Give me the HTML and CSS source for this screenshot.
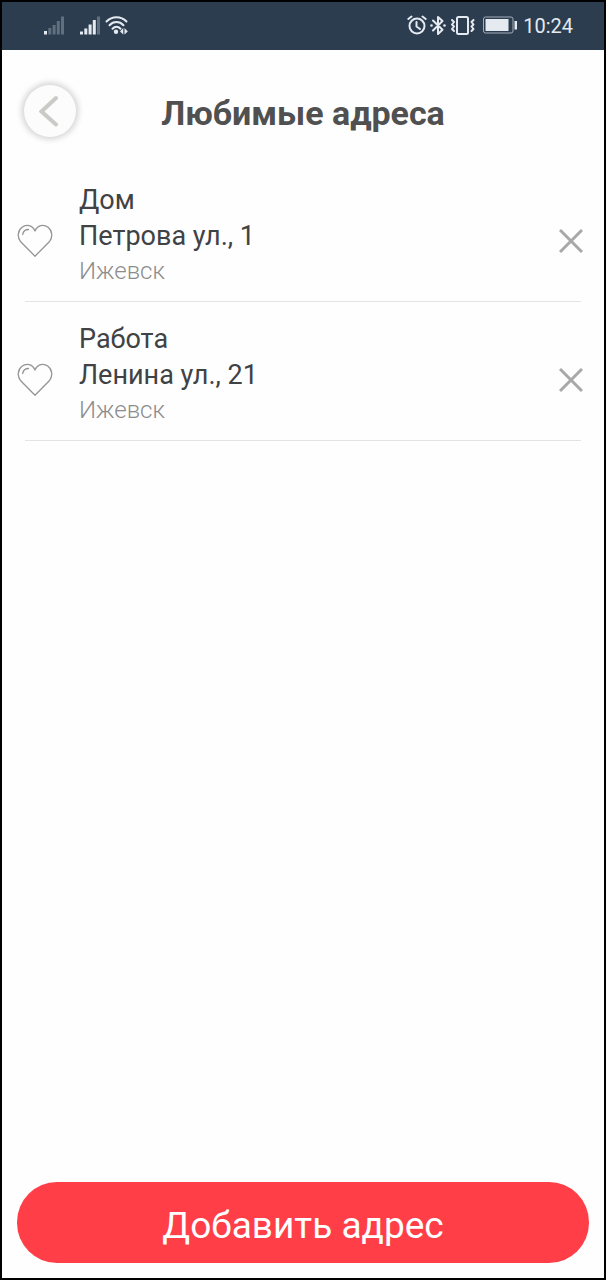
FILE: index.html
```html
<!DOCTYPE html>
<html lang="ru">
<head>
<meta charset="utf-8">
<meta name="viewport" content="width=device-width, initial-scale=1">
<title>Любимые адреса</title>
<link rel="stylesheet" href="styles.css">
</head>
<body>
<div class="screen">
  <div class="status">
    <div class="status-group">
      <svg class="signal" width="20" height="19" viewBox="0 0 20 19" aria-hidden="true">
        <path class="bar-on" d="M0 15h3v3.500H0z"/>
        <path class="bar-off" d="M4.300 12h3v6.500h-3zM8.600 9h3v9.500h-3zM12.800 5h3v13.500h-3zM17 .5h3v18h-3z"/>
      </svg>
      <svg class="signal" width="20" height="19" viewBox="0 0 20 19" aria-hidden="true">
        <path class="bar-on" d="M0 15.500h3v3H0zM4.300 12.500h3v6h-3zM8.600 8.500h3v10h-3zM12.800 4h3v14.500h-3z"/>
        <path class="bar-off" d="M17 .5h3v18h-3z"/>
      </svg>
      <svg class="wifi" width="23" height="20" viewBox="0 0 23 20" aria-hidden="true">
        <g class="stroke" stroke-width="2">
          <path d="M1.500 6.500C7 .7 16 .7 21.500 6.500"/>
          <path d="M4.500 10.200c4-4.200 10-4.200 14 0"/>
          <path d="M7.500 13.700c2.500-2.600 5.500-2.600 8 0"/>
        </g>
        <circle class="fill" cx="11" cy="16.700" r="2.200"/>
        <path class="fill" d="M18.300 13v6.500L15 16.500zM19.500 13v6.500l3.300-3z"/>
      </svg>
    </div>
    <div class="status-group">
      <svg class="alarm" width="20" height="21" viewBox="0 0 20 21" aria-hidden="true">
        <g class="stroke" stroke-width="2">
          <circle cx="10" cy="11" r="7.500"/>
          <path d="M9.500 7v4.500l3.500 2.500M1.300 4L4.500 1.500M18.700 4L15.500 1.500"/>
        </g>
      </svg>
      <svg class="bluetooth" width="16" height="21" viewBox="0 0 16 21" aria-hidden="true">
        <path class="stroke" stroke-width="2" d="M3 5.500l9.500 9.300L8 19V2l4.500 4L3 15.500"/>
        <circle class="fill" cx="1.500" cy="10.500" r="1.300"/>
        <circle class="fill" cx="14.500" cy="10.500" r="1.300"/>
      </svg>
      <svg class="vibrate" width="25" height="21" viewBox="0 0 25 21" aria-hidden="true">
        <rect class="stroke" stroke-width="2" x="7" y="2" width="11" height="17" rx="1.500"/>
        <path class="stroke" stroke-width="2" d="M2 5l2 2-2 2.500 2 2-2 2.500 2 2M23.500 5l-2 2 2 2.500-2 2 2 2.500-2 2"/>
      </svg>
      <svg class="battery" width="34" height="18" viewBox="0 0 34 18" aria-hidden="true">
        <rect class="cell" x=".5" y="1" width="29.500" height="16" rx="2"/>
        <path class="fill" d="M2.500 3h23v12h-23zM31.500 5H34v8.500h-2.500z"/>
      </svg>
      <span class="clock">10:24</span>
    </div>
  </div>

  <header class="header">
    <button class="back" type="button" aria-label="Назад">
      <svg width="20" height="32" viewBox="0 0 20 32" aria-hidden="true"><path d="M17 3L2.500 16.500 17 29.500"/></svg>
    </button>
    <h1 class="title">Любимые адреса</h1>
  </header>

  <main class="content">
    <ul class="list">
      <li class="item">
        <div class="row">
          <svg class="heart" width="36" height="34" viewBox="0 0 36 34" aria-hidden="true"><path d="M18 32.200L3.700 17.800C-.2 13.200.8 6.500 5 3.300c4.500-3.500 10.500-2 13 3.700 2.500-5.700 8.500-7.200 13-3.700 4.200 3.200 5.200 9.900 1.300 14.500zM5.700 10.500C6.200 7.500 8.500 5.500 11.500 5.500"/></svg>
          <div class="address">
            <div class="line">Дом</div>
            <div class="line">Петрова ул., 1</div>
            <div class="city">Ижевск</div>
          </div>
          <button class="remove" type="button" aria-label="Удалить: Дом">
            <svg width="24" height="24" viewBox="0 0 24 24" aria-hidden="true"><path d="M1 1l22 22M23 1L1 23"/></svg>
          </button>
        </div>
      </li>
      <li class="item">
        <div class="row">
          <svg class="heart" width="36" height="34" viewBox="0 0 36 34" aria-hidden="true"><path d="M18 32.200L3.700 17.800C-.2 13.200.8 6.500 5 3.300c4.500-3.500 10.500-2 13 3.700 2.500-5.700 8.500-7.200 13-3.700 4.200 3.200 5.200 9.900 1.300 14.500zM5.700 10.500C6.200 7.500 8.500 5.500 11.500 5.500"/></svg>
          <div class="address">
            <div class="line">Работа</div>
            <div class="line">Ленина ул., 21</div>
            <div class="city">Ижевск</div>
          </div>
          <button class="remove" type="button" aria-label="Удалить: Работа">
            <svg width="24" height="24" viewBox="0 0 24 24" aria-hidden="true"><path d="M1 1l22 22M23 1L1 23"/></svg>
          </button>
        </div>
      </li>
    </ul>
  </main>

  <footer class="footer">
    <button class="add" type="button">Добавить адрес</button>
  </footer>
</div>
</body>
</html>
```

FILE: styles.css
```css
* {
  box-sizing: border-box;
}

body {
  margin: 0;
  background: #fefefe;
  font-family: Roboto, "Noto Sans", sans-serif;
}

button {
  font: inherit;
  border: 0;
  padding: 0;
  cursor: pointer;
}

svg {
  display: block;
  flex: none;
}

.screen {
  display: flex;
  flex-direction: column;
  min-height: 100vh;
  border: 2px solid #000;
}

.status {
  display: flex;
  justify-content: space-between;
  align-items: center;
  height: 48px;
  padding: 0 31px 2px 42px;
  background: #2d3d50;
  color: #e4eaf0;
}

.status-group {
  display: flex;
  align-items: center;
}

.signal {
  margin-right: 16px;
}

.signal + .wifi {
  margin-left: -11px;
}

.bluetooth {
  margin: 0 4px 0 3px;
}

.battery {
  margin: 0 6px 0 8px;
}

.clock {
  padding-top: 2px;
  font-size: 20px;
  line-height: 24px;
}

.stroke {
  fill: none;
  stroke: #e4eaf0;
  stroke-linecap: round;
  stroke-linejoin: round;
}

.fill,
.bar-on {
  fill: #e4eaf0;
}

.bar-off {
  fill: #607080;
}

.cell {
  fill: none;
  stroke: #a3adb7;
}

.header {
  display: grid;
  grid-template-columns: 52px 1fr 52px;
  align-items: center;
  padding: 35px 22px 26px;
}

.back {
  display: flex;
  align-items: center;
  justify-content: center;
  width: 52px;
  height: 52px;
  padding-right: 3px;
  border-radius: 50%;
  background: #fcfcfc;
  box-shadow: 0 0 6px 2px #cfcfcf;
}

.back path {
  fill: none;
  stroke: #cacac6;
  stroke-width: 4;
  stroke-linecap: round;
}

.title {
  margin: 4px 0 0;
  font-size: 34px;
  line-height: 40px;
  font-weight: 700;
  text-align: center;
  color: #505050;
}

.content {
  flex: 1;
}

.list {
  margin: 0;
  padding: 0;
  list-style: none;
}

.item::after {
  content: "";
  display: block;
  height: 1px;
  margin: 0 23px;
  background: #e4e4e4;
}

.row {
  display: flex;
  align-items: center;
  padding: 19px 21px 13px 15px;
}

.heart {
  margin-top: 12px;
}

.heart path {
  fill: none;
  stroke: #959595;
  stroke-width: 1.3;
  stroke-linecap: round;
  stroke-linejoin: round;
}

.address {
  flex: 1;
  padding-left: 26px;
}

.line {
  font-size: 27px;
  line-height: 36px;
  color: #404244;
}

.city {
  font-size: 24px;
  line-height: 34px;
  font-weight: 300;
  color: #8c8c8c;
}

.remove {
  margin-top: 12px;
  background: none;
}

.remove path {
  fill: none;
  stroke: #a8a8a8;
  stroke-width: 3;
}

.footer {
  padding: 0 15px 15px;
}

.add {
  display: block;
  width: 100%;
  padding: 20px 0 14px;
  border-radius: 40px;
  background: #ff3e48;
  color: #fff;
  font-size: 37px;
  line-height: 47px;
}
```
